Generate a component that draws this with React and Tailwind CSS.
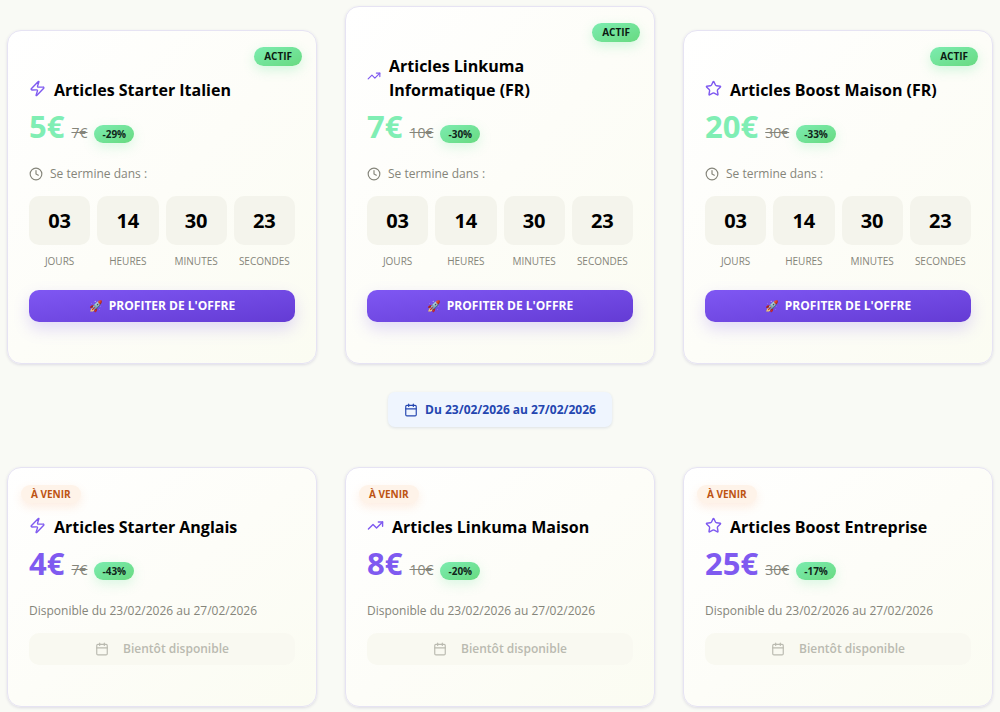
import React from 'react';
import { Calendar, Clock, Star, TrendingUp, Zap } from 'lucide-react';
import { clsx } from 'clsx';

const activeOffers = [
    { title: 'Articles Starter Italien', icon: Zap, price: '5€', oldPrice: '7€', discount: '-29%' },
    { title: 'Articles Linkuma Informatique (FR)', icon: TrendingUp, price: '7€', oldPrice: '10€', discount: '-30%', smallIcon: true },
    { title: 'Articles Boost Maison (FR)', icon: Star, price: '20€', oldPrice: '30€', discount: '-33%' },
];

const upcomingOffers = [
    { title: 'Articles Starter Anglais', icon: Zap, price: '4€', oldPrice: '7€', discount: '-43%' },
    { title: 'Articles Linkuma Maison', icon: TrendingUp, price: '8€', oldPrice: '10€', discount: '-20%' },
    { title: 'Articles Boost Entreprise', icon: Star, price: '25€', oldPrice: '30€', discount: '-17%' },
];

const countdown = [
    { value: '03', label: 'Jours' },
    { value: '14', label: 'Heures' },
    { value: '30', label: 'Minutes' },
    { value: '23', label: 'Secondes' },
];

const Card = ({ children, className }) => (
    <article
        className={clsx(
            'relative rounded-[14px] border border-[#e6e3f3] bg-linear-to-br from-white via-[#fdfdf8] to-[#fbfcf2] px-[21px] shadow-[0_1px_3px_rgba(80,70,140,0.16)]',
            className
        )}
    >
        {children}
    </article>
);

const OfferTitle = ({ offer }) => {
    const Icon = offer.icon;
    return (
        <div className="flex items-center gap-2">
            <Icon
                size={offer.smallIcon ? 14 : 17}
                className="mb-1 shrink-0 text-[#7f5af0]"
                strokeWidth={2}
            />
            <h3 className={clsx('text-base leading-6 font-bold text-black', offer.smallIcon && 'max-w-[180px]')}>
                {offer.title}
            </h3>
        </div>
    );
};

const OfferPrice = ({ offer, active }) => (
    <div className="flex items-baseline gap-[7px]">
        <span className={clsx('text-[31px] leading-[48px] font-bold', active ? 'text-[#80eeb4]' : 'text-[#7f5af0]')}>
            {offer.price}
        </span>
        <span className="text-sm text-[#85857a] line-through">{offer.oldPrice}</span>
        <span className="rounded-full bg-linear-to-br from-[#7cecb0] to-[#68da80] px-2 text-[10px] leading-[18px] font-bold text-[#10261a] shadow-[0_4px_12px_rgba(110,231,160,0.25)]">
            {offer.discount}
        </span>
    </div>
);

const ActiveCard = ({ offer }) => (
    <Card className="pt-[47px] pb-[41px]">
        <span className="absolute top-4 right-3.5 rounded-full bg-linear-to-br from-[#7cecb0] to-[#68da80] px-2.5 text-[10px] leading-[19px] font-bold text-[#0c1a12] shadow-[0_4px_12px_rgba(110,231,160,0.3)]">
            ACTIF
        </span>
        <OfferTitle offer={offer} />
        <OfferPrice offer={offer} active />
        <p className="mt-3.5 flex items-center gap-[7px] text-xs leading-5 text-[#85857a]">
            <Clock size={14} />
            Se termine dans :
        </p>
        <div className="mt-3 grid grid-cols-4 gap-[7px] text-center">
            {countdown.map((unit) => (
                <div key={unit.label}>
                    <div className="rounded-[10px] bg-[#f4f4ec] pt-px text-xl leading-[48px] font-bold text-black">
                        {unit.value}
                    </div>
                    <div className="mt-2 text-[10px] leading-4 text-[#85857a] uppercase">{unit.label}</div>
                </div>
            ))}
        </div>
        <button
            type="button"
            className="mt-[21px] flex w-full items-center justify-center gap-1.5 rounded-[10px] bg-linear-to-br from-[#7f57f3] to-[#643bd4] text-xs leading-8 font-bold text-white shadow-[0_7px_16px_rgba(127,90,240,0.22)]"
        >
            <span className="text-[11px]">🚀</span>
            PROFITER DE L'OFFRE
        </button>
    </Card>
);

const UpcomingCard = ({ offer }) => (
    <Card className="pt-[17px] pb-[41px]">
        <span className="-ml-2 block w-fit rounded-full bg-[#fef3e9] px-2.5 text-[10px] leading-[18px] font-bold text-[#bd5312] shadow-[0_4px_10px_rgba(251,146,80,0.16)]">
            À VENIR
        </span>
        <div className="mt-3">
            <OfferTitle offer={offer} />
        </div>
        <OfferPrice offer={offer} />
        <p className="mt-3.5 text-xs leading-5 text-[#85857a]">Disponible du 23/02/2026 au 27/02/2026</p>
        <button
            type="button"
            disabled
            className="mt-3 flex w-full items-center justify-center gap-3.5 rounded-[10px] bg-[#f9f9f1] text-xs leading-8 font-semibold text-[#babab0]"
        >
            <Calendar size={14} />
            Bientôt disponible
        </button>
    </Card>
);

const App = () => {
    return (
        <main className="min-h-screen bg-[#f9faf5] px-[7px] pt-1.5 pb-[5px] font-['Open_Sans','Noto_Sans',sans-serif]">
            <section className="grid grid-cols-3 items-end gap-7">
                {activeOffers.map((offer) => (
                    <ActiveCard key={offer.title} offer={offer} />
                ))}
            </section>

            {/* Period of the next offers */}
            <div className="mt-7 mb-10 flex justify-center">
                <div className="flex items-center gap-[7px] rounded-[7px] bg-[#eff5fe] px-4 text-xs leading-[35px] font-bold text-[#2446b0] shadow-[0_1px_3px_rgba(60,80,140,0.14)]">
                    <Calendar size={14} />
                    Du 23/02/2026 au 27/02/2026
                </div>
            </div>

            <section className="grid grid-cols-3 items-end gap-7">
                {upcomingOffers.map((offer) => (
                    <UpcomingCard key={offer.title} offer={offer} />
                ))}
            </section>
        </main>
    );
};

export default App;
